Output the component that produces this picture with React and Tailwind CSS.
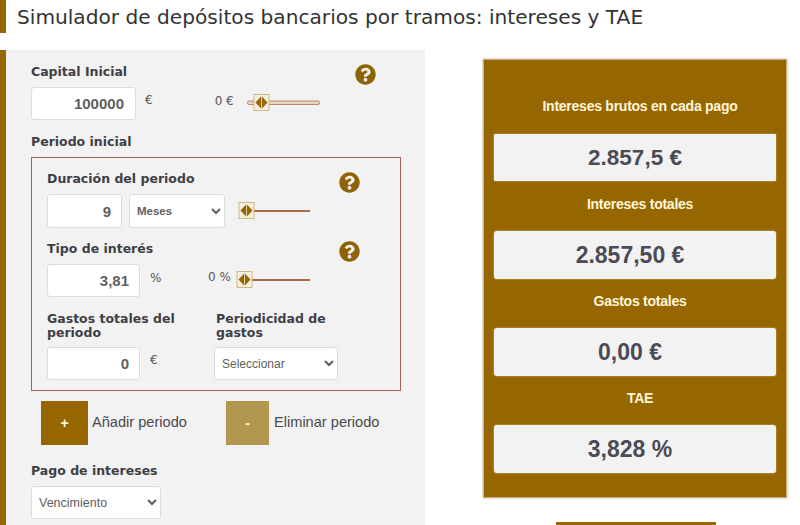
import React from "react";
import { FaQuestionCircle } from "react-icons/fa";

const Help = ({ className = "" }) => (
  <FaQuestionCircle className={"text-[#8f6208] text-[21px] " + className} />
);

const Slider = ({ width, track, className = "" }) => {
  const t = track === "double";
  return (
    <svg width={width} height="18" viewBox={`0 0 ${width} 18`} className={className}>
      {t ? (
        <rect x="0.5" y="7" width={width - 1} height="3.5" rx="1.5" fill="#ecd3c4" stroke="#b9876c" strokeWidth="1" />
      ) : (
        <rect x="1" y="8" width={width - 2} height="2" fill="#a9694a" />
      )}
      <g transform={`translate(${t ? 6 : 0},0)`}>
        <rect x="1" y="0.5" width="15" height="16" fill="#f4efdf" stroke="#d3b77f" strokeWidth="1" />
        <path d="M8.1 2.5 L2.5 8.5 L8.1 14.5 Z" fill="#966600" />
        <path d="M8.9 2.5 L14.5 8.5 L8.9 14.5 Z" fill="#966600" />
      </g>
    </svg>
  );
};

const labelCls = "font-['DejaVu_Sans',sans-serif] font-bold text-[12.5px] leading-[14px] text-[#3f3f46]";
const inputCls = "bg-white border border-[#dcdcdc] rounded-[3px] text-right font-['Liberation_Sans',sans-serif] text-[15px] font-bold text-[#5f5f5f] h-[33px] outline-none";
const selectCls = "bg-white border border-[#dcdcdc] rounded-[3px] font-['Liberation_Sans',sans-serif] text-[#5f5f5f] h-[33px] outline-none";
const unitCls = "font-['DejaVu_Sans',sans-serif] text-[12px] text-[#555]";
const labelBase = "w-full pl-[10px] text-center font-['Liberation_Sans',sans-serif] font-bold text-[14px] leading-[16px] text-[#fff6da] tracking-[-0.25px]";
const valueBase = "w-[282px] bg-[#f2f2f2] shadow-[0_0_2px_rgba(255,255,255,0.6)] flex items-center justify-center font-['Liberation_Sans',sans-serif] font-bold text-[#4b4b55]";

const Result = ({ label, value, labelBox, valueBox }) => (
  <div className="flex flex-col items-center">
    <div className={labelBase + " " + labelBox}>{label}</div>
    <div className={valueBase + " " + valueBox}>{value}</div>
  </div>
);

export default function App() {
  return (
    <div className="w-[800px] h-[525px] overflow-hidden bg-white flex flex-col">
      <div className="h-[33px] flex items-stretch shrink-0">
        <div className="w-[6px] bg-[#966600]" />
        <h1 className="ml-[11px] font-['DejaVu_Sans',sans-serif] text-[20.15px] leading-[35px] text-[#333] font-normal whitespace-nowrap">
          Simulador de depósitos bancarios por tramos: intereses y TAE
        </h1>
      </div>
      <div className="flex mt-[17px] items-start">
        <div className="w-[425px] h-[475px] shrink-0 bg-[#f2f2f2] border-l-[6px] border-[#966600] pl-[25px] pt-[15px]">
          {/* Capital */}
          <div className="flex items-start h-[70px] relative">
            <div>
              <div className={labelCls}>Capital Inicial</div>
              <div className="flex items-start mt-[8px]">
                <input readOnly value="100000" className={inputCls + " w-[105px] pr-[11px]"} />
                <span className={unitCls + " ml-[9px] mt-[4px]"}>€</span>
                <span className={unitCls + " ml-[62px] mt-[5px] w-[32px] shrink-0 whitespace-nowrap"}>0 €</span>
                <Slider width={73} track="double" className="mt-[7px]" />
              </div>
            </div>
            <Help className="absolute left-[324px] top-[-1px]" />
          </div>
          <div className={labelCls}>Periodo inicial</div>
          {/* Box */}
          <div className="mt-[8px] w-[370px] h-[234px] border border-[#a5605c] pl-[15px] pt-[14px]">
            <div className="flex items-start relative">
              <div>
                <div className={labelCls}>Duración del periodo</div>
                <div className="flex items-start mt-[8px]">
                  <input readOnly value="9" className={inputCls + " w-[75px] h-[34px] pr-[10px]"} />
                  <select className={selectCls + " ml-[7px] w-[96px] h-[34px] pl-[3px] text-[11.5px] font-bold"}>
                    <option>Meses</option>
                  </select>
                  <Slider width={73} className="ml-[13px] mt-[8px]" />
                </div>
              </div>
              <Help className="absolute left-[292px] top-0" />
            </div>
            <div className="flex items-start relative mt-[14px]">
              <div>
                <div className={labelCls}>Tipo de interés</div>
                <div className="flex items-start mt-[8px]">
                  <input readOnly value="3,81" className={inputCls + " w-[93px] pr-[10px]"} />
                  <span className={unitCls + " ml-[10px] mt-[5px] w-[12px]"}>%</span>
                  <span className={unitCls + " ml-[46px] mt-[4px] w-[28px] whitespace-nowrap"}>0 %</span>
                  <Slider width={75} className="mt-[7px]" />
                </div>
              </div>
              <Help className="absolute left-[292px] top-[-1px]" />
            </div>
            <div className="flex items-start mt-[15px]">
              <div className="w-[167px]">
                <div className={labelCls + " w-[140px] h-[28px]"}>Gastos totales del periodo</div>
                <div className="flex items-start mt-[7px]">
                  <input readOnly value="0" className={inputCls + " w-[93px] pr-[10px]"} />
                  <span className={unitCls + " ml-[10px] mt-[4px]"}>€</span>
                </div>
              </div>
              <div>
                <div className={labelCls + " ml-[2px] w-[130px] h-[28px]"}>Periodicidad de gastos</div>
                <select className={selectCls + " mt-[7px] w-[124px] pl-[3px] text-[12px]"}>
                  <option>Seleccionar</option>
                </select>
              </div>
            </div>
          </div>
          {/* Buttons */}
          <div className="flex items-center mt-[10px] ml-[10px] font-['Liberation_Sans',sans-serif] text-[14.6px] text-[#4a4a4a]">
            <button className="w-[47px] h-[44px] bg-[#966600] text-[#fff6da] font-bold text-[14px]">+</button>
            <span className="ml-[4px] w-[134px] -mt-[1px]">Añadir periodo</span>
            <button className="w-[43px] h-[44px] bg-[#b39650] text-[#fff6da] font-bold text-[14px]">-</button>
            <span className="ml-[5px] -mt-[1px]">Eliminar periodo</span>
          </div>
          <div className={labelCls + " mt-[19px]"}>Pago de intereses</div>
          <select className={selectCls + " mt-[8px] w-[130px] pl-[3px] text-[12.5px]"}>
            <option>Vencimiento</option>
          </select>
        </div>
        <div className="ml-[58px] mt-[9px] w-[304px] flex flex-col items-center">
          <div className="w-[304px] h-[439px] bg-[#966600] border border-[#c9b285] shadow-[0_0_2px_rgba(120,90,30,0.6)]">
            <Result label="Intereses brutos en cada pago" value="2.857,5 €" labelBox="h-[74px] pt-[38px]" valueBox="h-[47px] rounded-[1px] text-[22.5px]" />
            <Result label="Intereses totales" value="2.857,50 €" labelBox="h-[50px] pt-[15px]" valueBox="h-[48px] rounded-[3px] text-[23px] pr-[10px]" />
            <Result label="Gastos totales" value="0,00 €" labelBox="h-[49px] pt-[14px]" valueBox="h-[48px] rounded-[3px] text-[23px] pr-[10px]" />
            <Result label="TAE" value="3,828 %" labelBox="h-[49px] pt-[14px]" valueBox="h-[48px] rounded-[3px] text-[23px] pr-[10px]" />
          </div>
          <div className="w-[160px] h-[20px] bg-[#966600] mt-[24px] ml-[2px] shrink-0" />
        </div>
      </div>
    </div>
  );
}
